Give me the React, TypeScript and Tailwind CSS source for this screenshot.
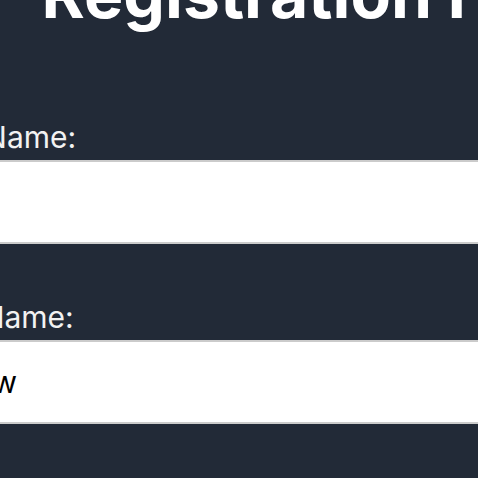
import { useState } from "react";

interface Field {
  id: string;
  label: string;
  initial: string;
}

const fields: Field[] = [
  { id: "firstName", label: "First Name:", initial: "" },
  { id: "lastName", label: "Last Name:", initial: "Andrew" },
];

const FormField = ({ field }: { field: Field }) => {
  const [value, setValue] = useState(field.initial);

  return (
    <div className="flex flex-col">
      <label
        htmlFor={field.id}
        className="block pl-[22px] mb-[5px] text-[30px] leading-[35px] text-[#f2f2f2]"
      >
        {field.label}
      </label>
      <input
        id={field.id}
        type="text"
        value={value}
        onChange={(e) => setValue(e.target.value)}
        className="w-full h-[84px] pl-[14px] pr-3 bg-white text-black text-[30px] border-2 border-[#cbcbcb] outline-none"
      />
    </div>
  );
};

export default function App() {
  return (
    <div
      className="w-full h-screen overflow-hidden bg-[#222a37]"
      style={{ fontFamily: "Inter, sans-serif" }}
    >
      <div className="w-[870px] ml-[-108px] flex flex-col">
        {/* title */}
        <h1 className="mt-[-39px] text-center text-[66px] leading-[1] font-bold text-white">
          Registration Form
        </h1>

        {/* fields */}
        <div className="mt-[93px] flex flex-col gap-[56px]">
          {fields.map((f) => (
            <FormField key={f.id} field={f} />
          ))}
        </div>
      </div>
    </div>
  );
}
